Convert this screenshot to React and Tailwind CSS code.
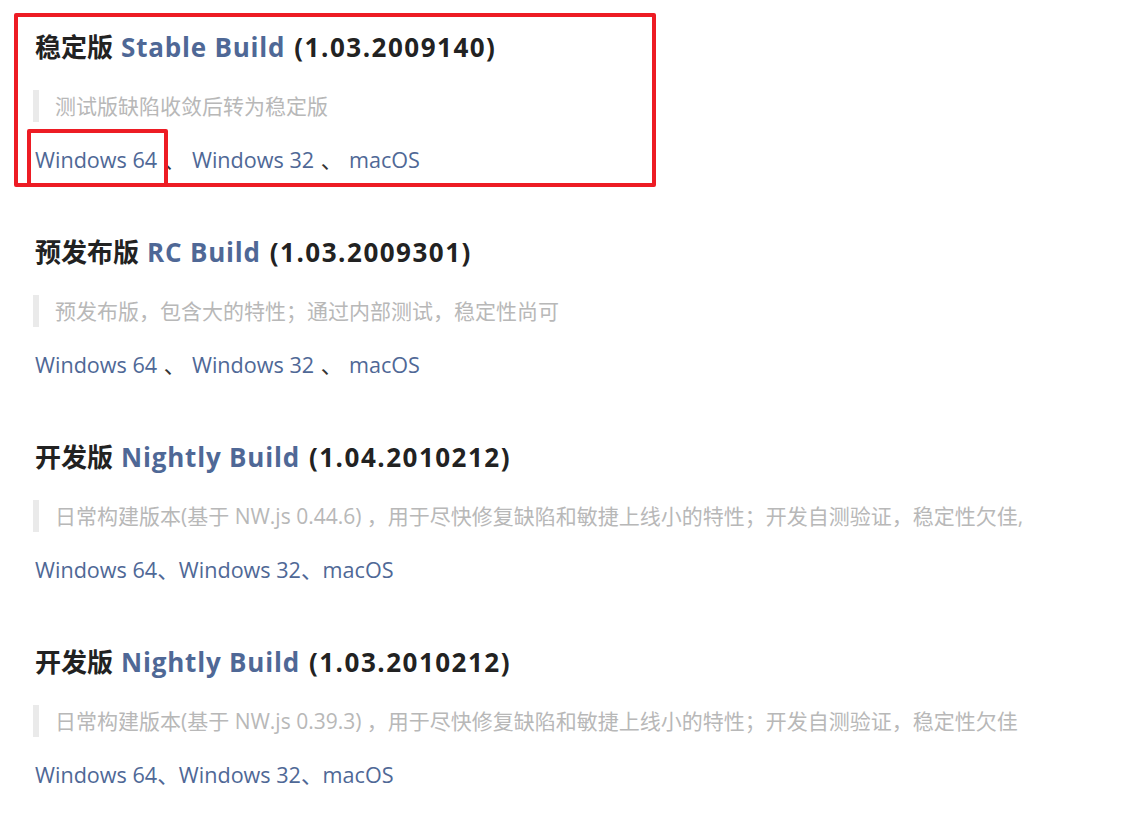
import React from "react";

const builds = [
  {
    zh: "稳定版",
    name: "Stable Build",
    version: "(1.03.2009140)",
    note: "测试版缺陷收敛后转为稳定版",
    spaced: true,
  },
  {
    zh: "预发布版",
    name: "RC Build",
    version: "(1.03.2009301)",
    note: "预发布版，包含大的特性；通过内部测试，稳定性尚可",
    spaced: true,
  },
  {
    zh: "开发版",
    name: "Nightly Build",
    version: "(1.04.2010212)",
    note: "日常构建版本(基于 NW.js 0.44.6) ，用于尽快修复缺陷和敏捷上线小的特性；开发自测验证，稳定性欠佳,",
    spaced: false,
  },
  {
    zh: "开发版",
    name: "Nightly Build",
    version: "(1.03.2010212)",
    note: "日常构建版本(基于 NW.js 0.39.3) ，用于尽快修复缺陷和敏捷上线小的特性；开发自测验证，稳定性欠佳",
    spaced: false,
  },
];

const BuildSection = ({ build, first }) => {
  const sep = build.spaced ? " 、 " : "、";
  const sepClass = build.spaced ? "text-[#333] px-[1px]" : "";
  return (
    <section className={first ? "" : "mt-[56px]"}>
      <h3 className="h-10 leading-10 text-[26px] font-bold text-[#222] whitespace-nowrap">
        {build.zh}
        <span className="ml-[8px] tracking-[0.8px] text-[#4f6896]">{build.name}</span>
        <span className="ml-[9px] tracking-[1.5px]">{build.version}</span>
      </h3>
      <blockquote className="mt-[23px] -ml-[2px] h-8 leading-8 border-l-[6px] border-[#eaeaea] pl-[16px] text-[21px] text-[#b8b8b8] whitespace-nowrap">
        {build.note}
      </blockquote>
      <p className="mt-[22px] h-8 leading-8 text-[21.6px] text-[#4f6896] whitespace-nowrap">
        <a>Windows 64</a>
        <span className={sepClass}>{sep}</span>
        <a>Windows 32</a>
        <span className={sepClass}>{sep}</span>
        <a>macOS</a>
      </p>
    </section>
  );
};

export default function App() {
  return (
    <div
      className="relative w-[1124px] h-[814px] bg-white overflow-hidden pl-[35px] pt-[27px]"
      style={{ fontFamily: '"Open Sans", "Noto Sans CJK SC", sans-serif' }}
    >
      {builds.map((b, i) => (
        <BuildSection key={i} build={b} first={i === 0} />
      ))}

      {/* annotation boxes */}
      <div className="absolute left-[14px] top-[13px] w-[642px] h-[174px] border-4 border-[#ed1c24] rounded-[2px] pointer-events-none" />
      <div className="absolute left-[27px] top-[129px] w-[141px] h-[58px] border-4 border-[#ed1c24] rounded-[2px] pointer-events-none" />
    </div>
  );
}
